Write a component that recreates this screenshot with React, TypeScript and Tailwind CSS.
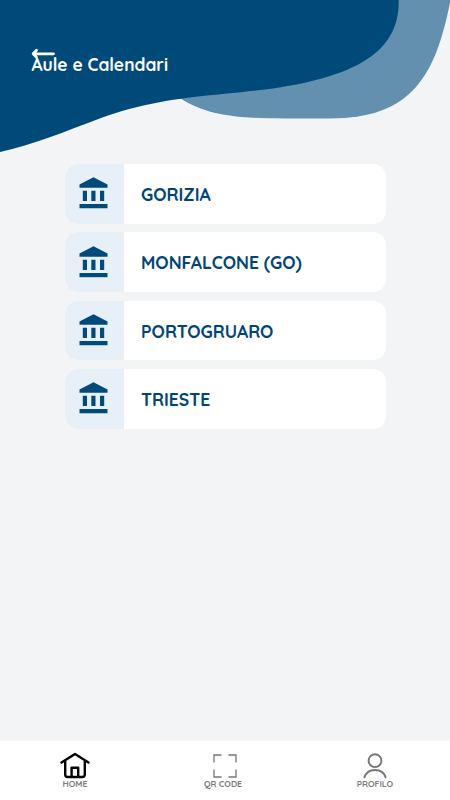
import type { ReactNode } from "react";

const locations = ["GORIZIA", "MONFALCONE (GO)", "PORTOGRUARO", "TRIESTE"];

function Waves() {
  return (
    <svg className="absolute top-0 left-0" width="450" height="160" viewBox="0 0 450 160">
      <path
        d="M160 0H450.5C436 74 413 118.5 330 118.5H285C235 118.5 206 115 180 98Z"
        fill="#6390ae"
      />
      <path
        d="M0 0H398.7C400 60 341 84 225 93.7C174 98.5 139 104 101 118C66 131 33 145 0 152Z"
        fill="#004a79"
      />
    </svg>
  );
}

function BankIcon() {
  return (
    <svg width="30" height="32" viewBox="0 0 30 32" fill="#004a7c">
      <path d="M14.5 0.3L28.5 7.5V10.8H0.5V7.5Z" />
      <path d="M3.8 13.8H8V24H3.8ZM12.3 13.8H16.5V24H12.3ZM21 13.8H25.2V24H21Z" />
      <path d="M0.5 27H28.5V31.2H0.5Z" />
    </svg>
  );
}

function LocationCard({ name }: { name: string }) {
  return (
    <button className="flex h-[59.5px] w-[321px] overflow-hidden rounded-[13px] bg-white text-left">
      <span className="flex h-full w-[59.5px] items-center justify-center bg-[#e7f0f6] pb-px">
        <BankIcon />
      </span>
      <span className="flex h-full items-center pt-px pl-[17px] text-[17.55px] font-bold whitespace-nowrap text-[#004579]">
        {name}
      </span>
    </button>
  );
}

function NavItem({ label, labelClass, children }: { label: string; labelClass?: string; children: ReactNode }) {
  return (
    <button className="flex flex-1 flex-col items-center pt-[11px]">
      {children}
      <span className={`text-[8.7px] leading-[10px] font-bold text-[#7c7c7c] ${labelClass ?? ""}`}>{label}</span>
    </button>
  );
}

export default function App() {
  return (
    <div className="flex h-[800px] w-[450px] flex-col overflow-hidden bg-[#f3f4f6] font-['Quicksand','Lato',sans-serif]">
      <header className="relative h-[164px] shrink-0">
        <Waves />
        <div className="relative pt-[48px] pl-[31px] text-white">
          <svg width="26" height="12" viewBox="0 0 26 12" fill="none" stroke="currentColor" strokeWidth="2.8" strokeLinecap="round" strokeLinejoin="round">
            <path d="M22.5 5.8H2.2M5.5 2.3L2.2 5.8L5.5 9.3" />
          </svg>
          <h1 className="-mt-[7px] pl-[0.6px] text-[17.4px] leading-6 font-bold">Aule e Calendari</h1>
        </div>
      </header>

      <main className="flex flex-1 flex-col items-center gap-[8.9px]">
        {locations.map((name) => (
          <LocationCard key={name} name={name} />
        ))}
      </main>

      <nav className="flex h-[59.5px] shrink-0 bg-white">
        <NavItem label="HOME">
          <svg width="30" height="27" viewBox="0 0 30 27" fill="none" stroke="black" strokeWidth="2.4" strokeLinecap="round" strokeLinejoin="round">
            <path d="M1.5 10.5L15 2L28.5 10.5M5.2 9V22.5Q5.2 25 7.7 25H22.3Q24.8 25 24.8 22.5V9M11.6 25V15.8H18.2V25" />
          </svg>
        </NavItem>
        <NavItem label="QR CODE" labelClass="mr-[4px]">
          <svg width="24" height="27" viewBox="0 0 24 27" fill="none" stroke="#777" strokeWidth="1.3">
            <path d="M1 10.5V3H8.5M15.5 3H23V10.5M23 17.5V25H15.5M8.5 25H1V17.5" />
          </svg>
        </NavItem>
        <NavItem label="PROFILO">
          <svg width="24" height="27" viewBox="0 0 24 27" fill="none" stroke="#777" strokeWidth="1.9" strokeLinecap="round">
            <circle cx="12" cy="8.7" r="6.4" />
            <path d="M1.4 25.4C4.5 15.5 19.5 15.5 22.6 25.4" />
          </svg>
        </NavItem>
      </nav>
    </div>
  );
}
